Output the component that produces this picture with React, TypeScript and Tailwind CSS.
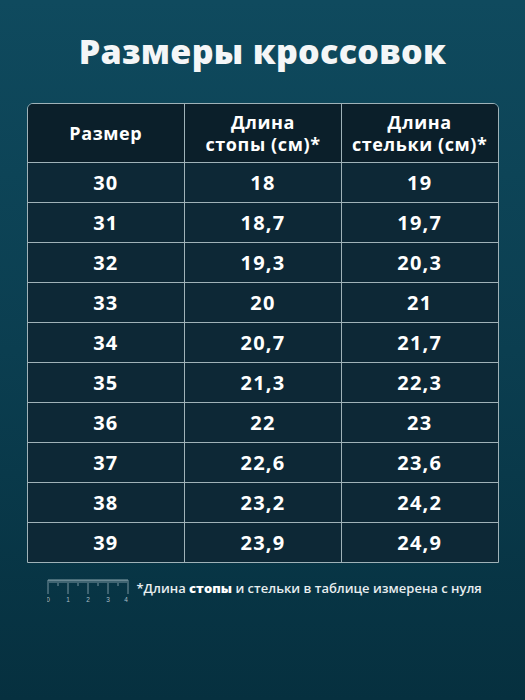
import React from 'react';

const rows = [
  ['30', '18', '19'],
  ['31', '18,7', '19,7'],
  ['32', '19,3', '20,3'],
  ['33', '20', '21'],
  ['34', '20,7', '21,7'],
  ['35', '21,3', '22,3'],
  ['36', '22', '23'],
  ['37', '22,6', '23,6'],
  ['38', '23,2', '24,2'],
  ['39', '23,9', '24,9'],
];

function Ruler() {
  const ticks = [];
  for (let i = 0; i <= 40; i++) {
    const x = 1 + i * 2;
    const h = i % 10 === 0 ? 14 : i % 5 === 0 ? 6 : 3;
    ticks.push(<line key={i} x1={x} y1={1} x2={x} y2={1 + h} stroke="#a9bfc6" strokeWidth={0.7} />);
  }
  return (
    <svg width="84" height="26" viewBox="0 0 84 26" className="shrink-0">
      <line x1="1" y1="1" x2="81" y2="1" stroke="#a9bfc6" strokeWidth="0.8" />
      {ticks}
      {[0, 1, 2, 3, 4].map((n) => (
        <text key={n} x={1 + n * 20 - (n === 4 ? 2 : 0)} y={23} fontSize="6.5" fill="#a9bfc6" textAnchor="middle" fontFamily="Liberation Sans, sans-serif">{n}</text>
      ))}
    </svg>
  );
}

export default function App() {
  return (
    <div
      className="w-[525px] h-[700px] overflow-hidden bg-linear-to-b from-[#0f4a5e] via-[#0b3e50] to-[#06303f] text-white flex flex-col items-center"
      style={{ fontFamily: '"Open Sans", "Noto Sans", sans-serif' }}
    >
      <h1 className="mt-[29px] h-[44px] text-[34px] leading-[44px] font-extrabold tracking-[0.3px] text-[#f4f6f7]">Размеры кроссовок</h1>

      <div className="mt-[30px] w-[472px] rounded-t-md border border-[#9fb2b8] overflow-hidden">
        <div className="grid grid-cols-3 h-[58px] bg-[#0b1f2a]">
          <div className="flex items-center justify-center text-[18px] font-bold tracking-[0.6px]">Размер</div>
          <div className="flex items-center justify-center text-center text-[18px] font-bold tracking-[0.6px] leading-[22px] border-l border-[#9fb2b8]">Длина<br />стопы (см)*</div>
          <div className="flex items-center justify-center text-center text-[18px] font-bold tracking-[0.6px] leading-[22px] border-l border-[#9fb2b8]">Длина<br />стельки (см)*</div>
        </div>
        {rows.map((r) => (
          <div key={r[0]} className="grid grid-cols-3 h-[40px] bg-[#0d2836] border-t border-[#9fb2b8]">
            <div className="flex items-center justify-center text-[20px] font-bold tracking-[1.2px]">{r[0]}</div>
            <div className="flex items-center justify-center text-[20px] font-bold tracking-[1.2px] border-l border-[#9fb2b8]">{r[1]}</div>
            <div className="flex items-center justify-center text-[20px] font-bold tracking-[1.2px] border-l border-[#9fb2b8]">{r[2]}</div>
          </div>
        ))}
      </div>

      <div className="mt-[16px] w-[472px] flex items-center gap-[6px] pl-[20px]">
        <Ruler />
        <p className="text-[13px] font-semibold text-[#e8eef0] -mt-[6px]">
          *Длина <span className="font-extrabold text-white">стопы</span> и стельки в таблице измерена с нуля
        </p>
      </div>
    </div>
  );
}
